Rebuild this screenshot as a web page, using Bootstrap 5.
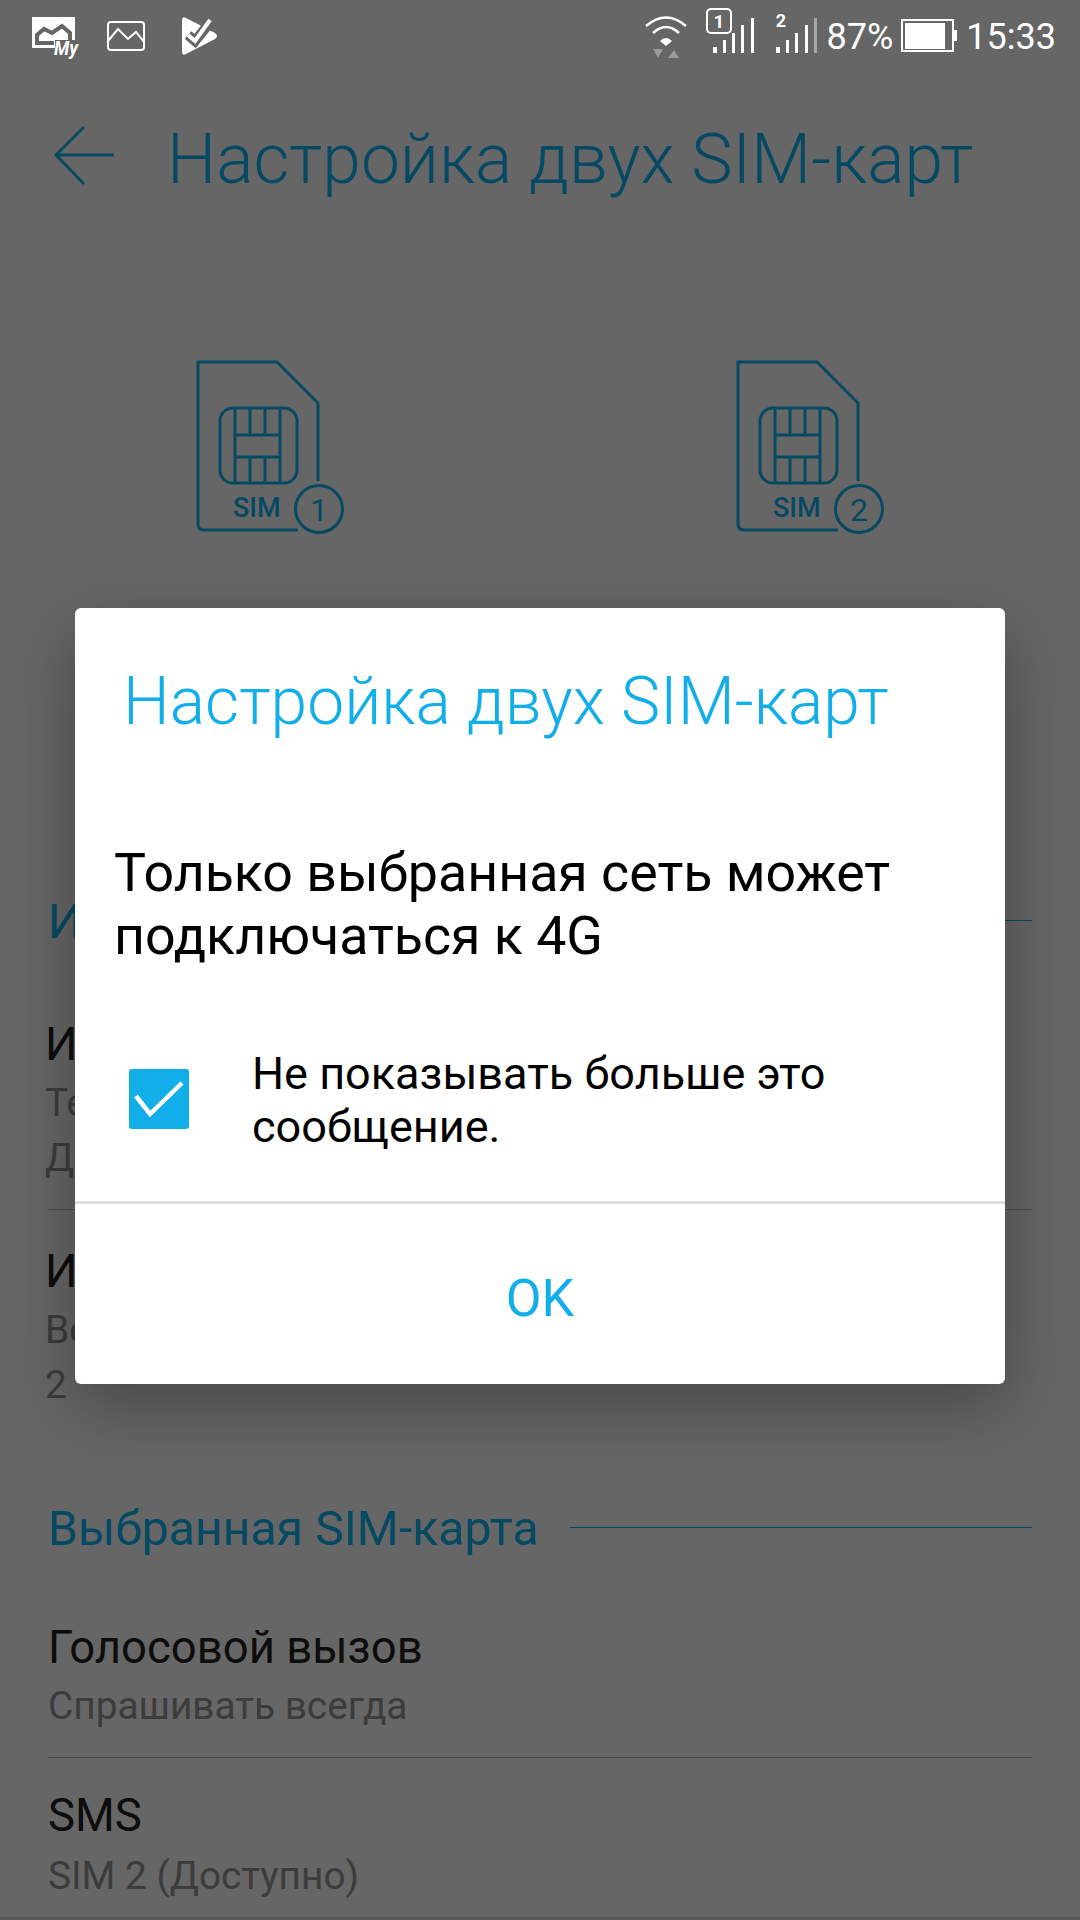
<!DOCTYPE html>
<html lang="ru">
  <head>
    <meta charset="UTF-8" />
    <meta name="viewport" content="width=device-width, initial-scale=1.0" />
    <title>Настройка двух SIM-карт</title>
    <link
      href="https://cdn.jsdelivr.net/npm/bootstrap@5.3.0/dist/css/bootstrap.min.css"
      rel="stylesheet"
    />
    <style>
      body {
        width: 1080px;
        height: 1920px;
        overflow: hidden;
        background: #fff;
        color: #000;
        font-family: Roboto, "Noto Sans", sans-serif;
      }
      .status-row {
        height: 72px;
        z-index: 3;
        color: #fff;
        padding: 0 24px 0 30px;
      }
      .status-row svg {
        display: block;
      }
      .status-txt {
        font-size: 36px;
        line-height: 72px;
        padding-top: 1px;
      }
      .gap-a { margin-left: 24px; }
      .gap-b { margin-left: 30px; }
      .gap-c { margin-left: 14px; }
      .gap-d { margin-left: 18px; }
      .gap-e { margin-left: 8px; }
      .gap-f { margin-left: 7px; }

      .top-bar {
        padding: 48px 0 0 50px;
        height: 128px;
      }
      .top-title {
        margin-left: 47px;
        font-size: 69.5px;
        font-weight: 300;
        line-height: 80px;
        color: #0dbaf5;
        white-space: nowrap;
      }
      .sim-row {
        margin-top: 160px;
        height: 180px;
      }
      .sim-pane {
        width: 540px;
      }
      .sim-label {
        font-size: 27px;
        font-weight: 500;
        fill: #0dbaf5;
      }
      .sim-num {
        font-size: 32px;
        fill: #0dbaf5;
      }
      .pref-list {
        padding: 0 48px;
      }
      .sec-head {
        font-size: 48.2px;
        line-height: 50px;
        color: #0dbaf5;
        white-space: nowrap;
      }
      .sec-head::after {
        content: "";
        flex: 1;
        height: 1.5px;
        margin: -3px 0 0 31px;
        background: #0dbaf5;
      }
      .sec-one { margin-top: 357px; }
      .sec-two { margin-top: 68px; }
      .pref-item {
        padding: 37px 0 24px;
        border-bottom: 1px solid #bababa;
      }
      .pref-item.no-line {
        border-bottom: 0;
      }
      .pref-name {
        font-size: 45.5px;
        line-height: 50px;
        color: #222;
      }
      .pref-sub {
        margin-top: 5px;
        font-size: 38.8px;
        line-height: 55px;
        color: #969696;
      }
      .first-item { padding-top: 73px; }
      .voice-item { padding-top: 69px; }
      .sms-item { padding-top: 33px; }
      .sms-item .pref-sub { margin-top: 7px; }
      .shift-left .pref-name,
      .shift-left .pref-sub {
        margin-left: -3px;
      }

      .scrim {
        z-index: 2;
        padding-top: 72px;
        background: rgba(0, 0, 0, 0.6);
        box-shadow: inset 0 -3px 0 rgba(0, 0, 0, 0.1);
      }
      .dlg-box {
        width: 930px;
        height: 776px;
        background: #fff;
        border-radius: 6px;
        box-shadow: 0 24px 70px rgba(0, 0, 0, 0.3);
      }
      .dlg-title {
        padding: 56px 48px 0;
        font-size: 66px;
        font-weight: 300;
        line-height: 76px;
        color: #12aeea;
        white-space: nowrap;
      }
      .dlg-msg {
        margin: 101px 39px 0;
        font-size: 53.7px;
        line-height: 63px;
      }
      .dlg-check {
        margin: 80px 40px 0 54px;
      }
      .tick-box {
        width: 60px;
        height: 60px;
        margin-top: 22px;
        border-radius: 3px;
        background: #12aeea;
        flex: none;
      }
      .tick-text {
        margin-left: 63px;
        font-size: 45px;
        line-height: 53px;
      }
      .dlg-rule {
        margin-top: 48px;
        height: 3px;
        background: #e0e0e0;
      }
      .dlg-ok {
        height: 180px;
        padding-top: 10px;
        font-size: 52px;
        color: #12aeea;
      }
    </style>
  </head>
  <body class="position-relative">
    <!-- Status bar stays above the dim layer -->
    <div class="status-row position-relative d-flex align-items-start">
      <svg width="50" height="72" viewBox="30 0 50 72">
        <path fill="#fff" d="M32 17H75V40H55V48H32Z" />
        <path fill="none" stroke="#666" stroke-width="4" d="M54 43H37V35L44 29L52 33L62 26L70 33V41" />
        <text x="54" y="55" fill="#fff" font-size="20" font-weight="700" font-style="italic" textLength="24" lengthAdjust="spacingAndGlyphs">My</text>
      </svg>
      <svg class="gap-a" width="44" height="72" viewBox="104 0 44 72">
        <rect x="108" y="22" width="36" height="28" rx="3" fill="none" stroke="#fff" stroke-width="2" />
        <path fill="none" stroke="#fff" stroke-width="2" d="M108 41L118 29L128 39L136 32L144 42" />
      </svg>
      <svg class="gap-b" width="44" height="72" viewBox="178 0 44 72">
        <path fill="#fff" d="M182 20Q182 16 186 18L215 33Q219 36 215 39L186 54Q182 56 182 52Z" />
        <path fill="none" stroke="#666" stroke-width="10" d="M188 35L195 41L212 20" />
        <path fill="none" stroke="#fff" stroke-width="4" d="M188 35L195 41L210 20" />
      </svg>
      <div class="ms-auto d-flex align-items-start">
        <svg width="45" height="72" viewBox="645 0 45 72">
          <g fill="none" stroke="#fff" stroke-width="2.5">
            <path d="M647 26Q667 9 687 26" />
            <path d="M654 33Q667 21 680 33" />
          </g>
          <path fill="#fff" d="M661 41Q667 35 673 41L667 46Z" />
          <path fill="#999" d="M654 49H664L659 58ZM669 58H680L675 50Z" />
        </svg>
        <svg class="gap-c" width="54" height="72" viewBox="704 0 54 72">
          <rect x="708" y="9" width="24" height="24" rx="4" fill="none" stroke="#fff" stroke-width="2" />
          <text x="720" y="28" fill="#fff" font-size="18" font-weight="700" text-anchor="middle">1</text>
          <path fill="#fff" d="M714 47h4v6h-4zM724 40h3v13h-3zM733 33h3v20h-3zM742 25h3v28h-3zM752 18h3v35h-3z" />
        </svg>
        <svg class="gap-d" width="44" height="72" viewBox="776 0 44 72">
          <text x="782" y="27" fill="#fff" font-size="18" font-weight="700" text-anchor="middle">2</text>
          <path fill="#fff" d="M777 47h4v6h-4zM787 40h3v13h-3zM796 33h3v20h-3zM806 25h3v28h-3z" />
          <path fill="#a6a6a6" d="M815 18h3v35h-3z" />
        </svg>
        <div class="status-txt gap-e">87%</div>
        <svg class="gap-f" width="58" height="72" viewBox="902 0 58 72">
          <rect x="904" y="20" width="51" height="31" fill="none" stroke="#fff" stroke-width="2" />
          <rect x="907" y="23" width="40" height="26" fill="#fff" />
          <rect x="956" y="30" width="3" height="11" fill="#fff" />
        </svg>
        <div class="status-txt gap-e">15:33</div>
      </div>
    </div>

    <div class="top-bar d-flex align-items-start">
      <svg width="70" height="80" viewBox="50 120 70 80">
        <path fill="none" stroke="#0dbaf5" stroke-width="2.8" d="M114 155H57M84 127L56 155L84 184" />
      </svg>
      <div class="top-title">Настройка двух SIM-карт</div>
    </div>

    <div class="sim-row d-flex">
      <div class="sim-pane d-flex justify-content-center">
        <svg width="180" height="180" viewBox="180 360 180 180">
          <g fill="none" stroke="#0dbaf5" stroke-width="3">
            <path d="M298 530H204Q198 530 198 524V362H277L318 403V481" />
            <rect x="220" y="408" width="77" height="75" rx="13" />
            <path d="M235 408V483M280 408V483M235 435H280M235 457H280M250 408V435M265 408V435M250 457V483M265 457V483" />
            <circle cx="319" cy="509" r="23.5" />
          </g>
          <text class="sim-label" x="233" y="517">SIM</text>
          <text class="sim-num" x="319" y="521" text-anchor="middle">1</text>
        </svg>
      </div>
      <div class="sim-pane d-flex justify-content-center">
        <svg width="180" height="180" viewBox="180 360 180 180">
          <g fill="none" stroke="#0dbaf5" stroke-width="3">
            <path d="M298 530H204Q198 530 198 524V362H277L318 403V481" />
            <rect x="220" y="408" width="77" height="75" rx="13" />
            <path d="M235 408V483M280 408V483M235 435H280M235 457H280M250 408V435M265 408V435M250 457V483M265 457V483" />
            <circle cx="319" cy="509" r="23.5" />
          </g>
          <text class="sim-label" x="233" y="517">SIM</text>
          <text class="sim-num" x="319" y="521" text-anchor="middle">2</text>
        </svg>
      </div>
    </div>

    <div class="pref-list">
      <div class="sec-head sec-one d-flex align-items-center">Информация о SIM-картах</div>
      <div class="pref-item first-item shift-left">
        <div class="pref-name">Имя SIM 1</div>
        <div class="pref-sub">Теле2<br />Доступно</div>
      </div>
      <div class="pref-item no-line shift-left">
        <div class="pref-name">Имя SIM 2</div>
        <div class="pref-sub">Всегда<br />2</div>
      </div>
      <div class="sec-head sec-two d-flex align-items-center">Выбранная SIM-карта</div>
      <div class="pref-item voice-item">
        <div class="pref-name">Голосовой вызов</div>
        <div class="pref-sub">Спрашивать всегда</div>
      </div>
      <div class="pref-item no-line sms-item">
        <div class="pref-name">SMS</div>
        <div class="pref-sub">SIM 2 (Доступно)</div>
      </div>
    </div>

    <!-- Dialog -->
    <div class="scrim position-absolute top-0 start-0 w-100 h-100 d-flex align-items-center justify-content-center">
      <div class="dlg-box">
        <div class="dlg-title">Настройка двух SIM-карт</div>
        <div class="dlg-msg">Только выбранная сеть может подключаться к 4G</div>
        <div class="dlg-check d-flex align-items-start">
          <div class="tick-box">
            <svg width="60" height="60" viewBox="129 1069 60 60">
              <path fill="none" stroke="#fff" stroke-width="4.5" d="M136 1096L150 1114L182 1083" />
            </svg>
          </div>
          <div class="tick-text">Не показывать больше это сообщение.</div>
        </div>
        <div class="dlg-rule"></div>
        <div class="dlg-ok d-flex align-items-center justify-content-center">OK</div>
      </div>
    </div>

    <script src="https://cdn.jsdelivr.net/npm/bootstrap@5.3.0/dist/js/bootstrap.bundle.min.js"></script>
  </body>
</html>
